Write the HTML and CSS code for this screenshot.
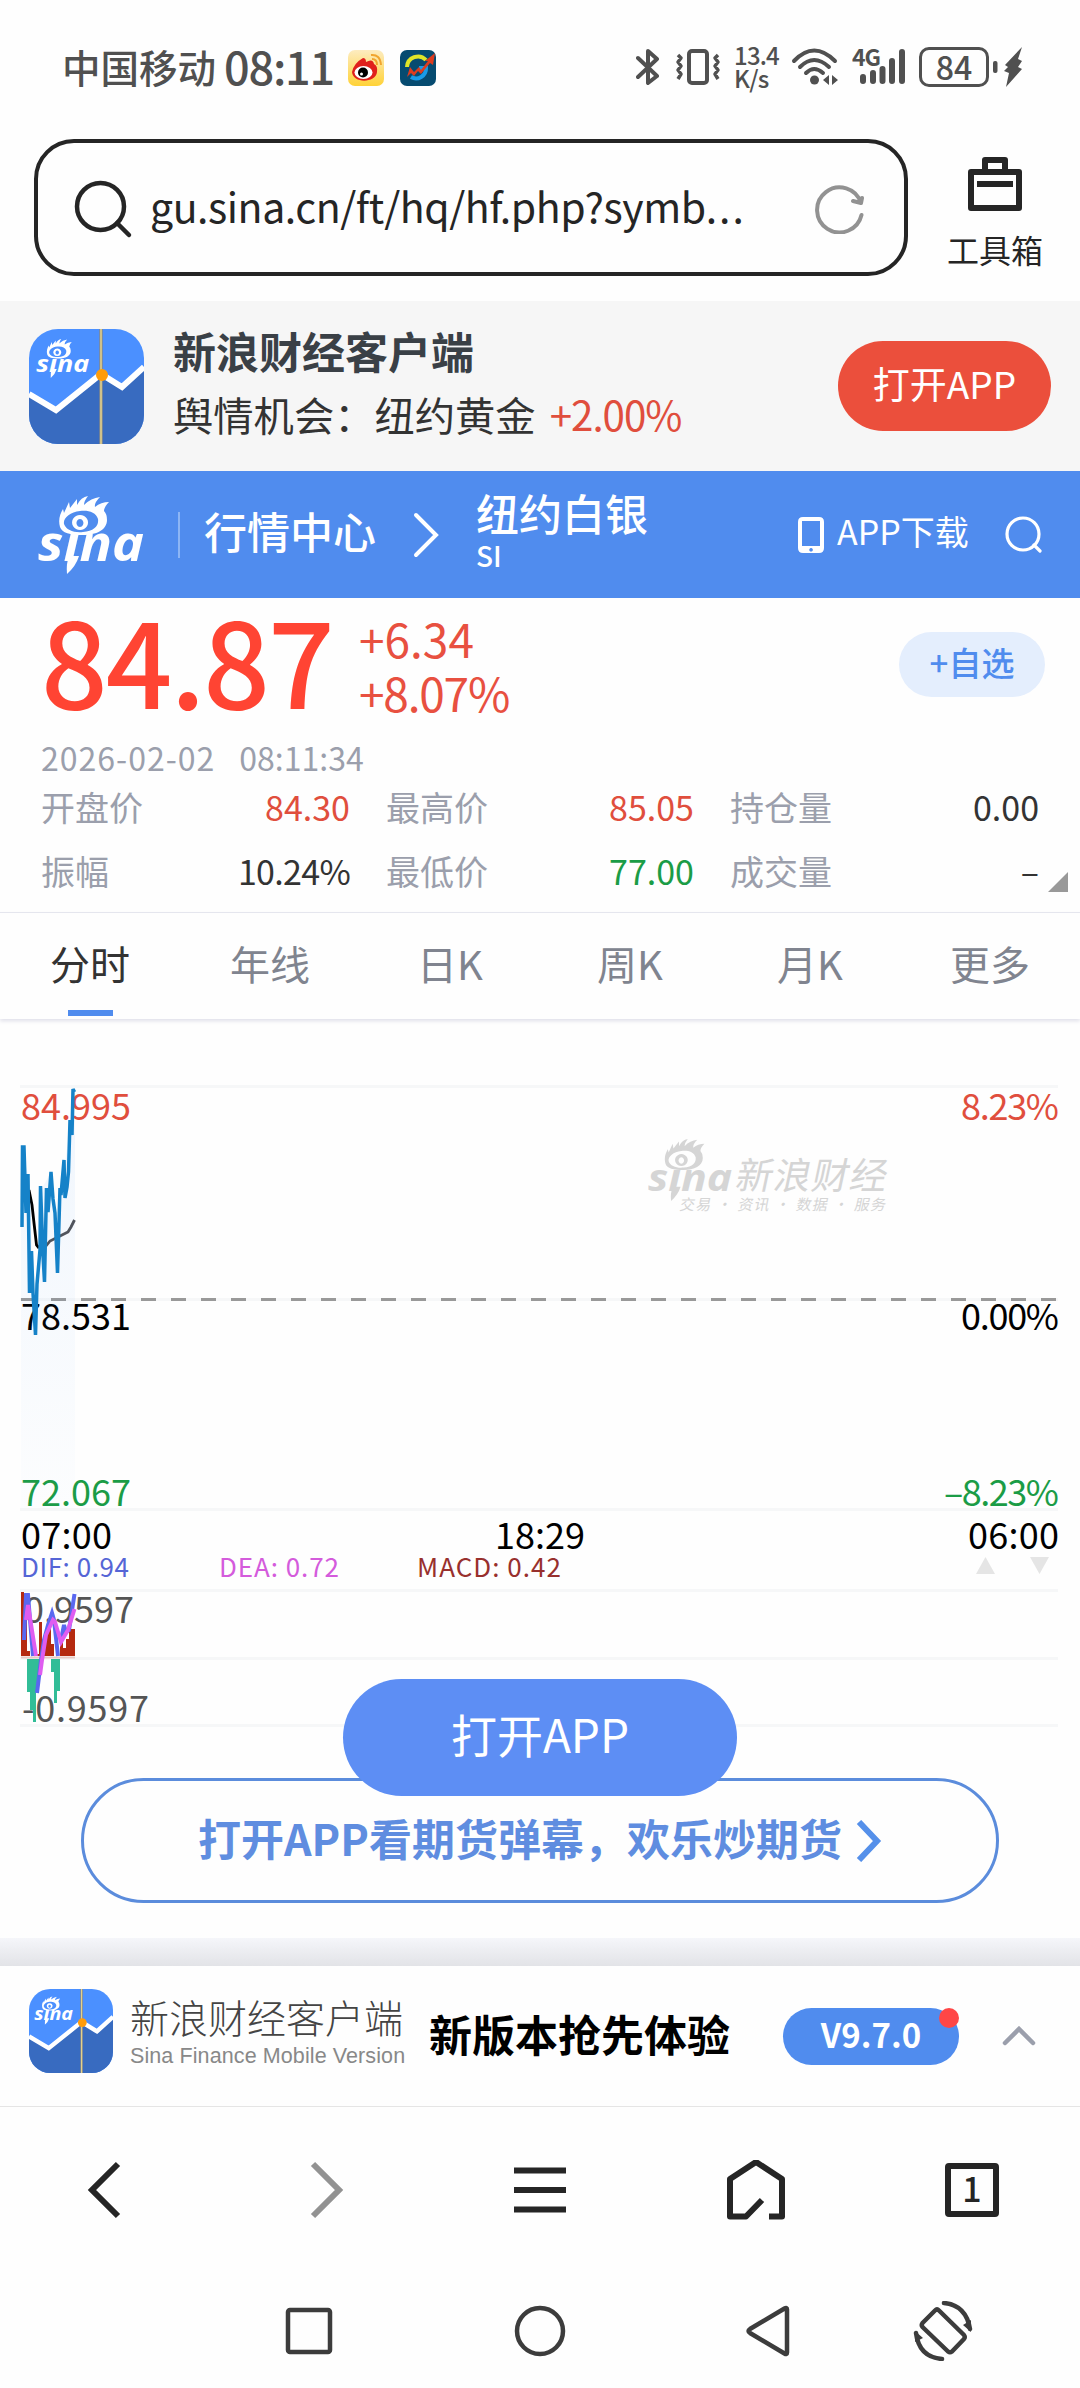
FILE: index.html
```html
<!DOCTYPE html>
<html lang="zh-CN">
<head>
    <meta charset="utf-8">
    <title>纽约白银</title>
    <link rel="stylesheet" href="styles.css">
</head>
<body>
    <svg class="defs" width="0" height="0">
        <symbol id="sina" viewBox="0 0 107 78">
            <path fill="currentColor" fill-rule="evenodd" d="M22 31C20 24 22 18 25 13L26 17L31 6L32 12L39 3L39 9Q43 1 50 0Q46 5 46 9Q53 2 62 1Q56 7 57 11Q63 6 71 6Q66 11 66 15Q69 18 69 24C69 34 58 39 45 39C32 39 24 37 22 31ZM26 28C28 34 36 37 45 36C56 35 61 30 60 23C58 16 50 14 42 15C32 16 25 22 26 28Z"/>
            <path fill="currentColor" fill-rule="evenodd" d="M42 19a8 7.500 0 1 0 .1 0ZM42 23a3.500 4 0 1 1-.1 0Z"/>
            <text class="sina-word" x="0" y="65" textLength="106" lengthAdjust="spacingAndGlyphs">sına</text>
            <path fill="currentColor" d="M31 60L41 60Q38 70 29 78Q28 68 31 60Z"/>
        </symbol>
        <symbol id="app-icon" viewBox="0 0 115 115">
            <clipPath id="r"><rect width="115" height="115" rx="29"/></clipPath>
            <g clip-path="url(#r)">
                <rect width="115" height="115" fill="#4b90ff"/>
                <path d="M0 65L27 82L72 46L93 58L115 38V115H0Z" fill="#386bc0"/>
                <path d="M0 65L27 81L72 45L93 58L115 38" fill="none" stroke="#fff" stroke-width="6"/>
                <path d="M72 0V115" stroke="#85898b" stroke-width="3.500"/>
                <path d="M72 0V115" stroke="#e8d58a" stroke-width="1.500"/>
                <circle cx="73" cy="46" r="6" fill="#ff9c0a"/>
                <use href="#sina" x="7" y="10" width="54" height="39" color="#fff"/>
            </g>
        </symbol>
    </svg>

    <div class="status">
        <span class="carrier">中国移动</span>
        <span class="clock">08:11</span>
        <svg class="weibo" width="36" height="36" viewBox="0 0 36 36">
            <defs><linearGradient id="wb" x2="0" y2="1"><stop offset="0" stop-color="#fdecc0"/><stop offset="1" stop-color="#ffd237"/></linearGradient></defs>
            <rect width="36" height="36" rx="7" fill="url(#wb)"/>
            <path d="M4 22Q6 13 15 8Q18 8 18 12Q25 8 26 14Q30 16 29 22C28 33 5 34 4 22Z" fill="#e0201c"/>
            <ellipse cx="15.500" cy="22.500" rx="9" ry="6.500" fill="#fff"/>
            <circle cx="15" cy="22.500" r="5" fill="#000"/>
            <circle cx="13.500" cy="24" r="1.500" fill="#fff"/>
            <path d="M23 5Q32 4 33 15M24 9Q29 9 29 15" fill="none" stroke="#f1a52f" stroke-width="2"/>
        </svg>
        <svg class="stock" width="36" height="36" viewBox="0 0 36 36">
            <rect width="36" height="36" rx="7" fill="#064b70"/>
            <path d="M7 17A11 11 0 0 1 26 10" fill="none" stroke="#dfe529" stroke-width="4"/>
            <path d="M11 27A10 10 0 0 0 26 18H19" fill="none" stroke="#189be8" stroke-width="4"/>
            <path d="M7 27L10 17L14 22L19 17L21 20L28 11L25 11L35 3L33 15L30 13L21 24L18 21L14 26L11 23Z" fill="#dc3c1f"/>
        </svg>
        <svg class="bt" width="24" height="38" viewBox="0 0 24 38" fill="none" stroke="#505050" stroke-width="4" stroke-linejoin="round" stroke-linecap="round">
            <path d="M2 10L21 28L12 35V3L21 11L2 29"/>
        </svg>
        <svg class="vib" width="46" height="38" viewBox="0 0 46 38" fill="none" stroke="#505050" stroke-width="4" stroke-linejoin="round">
            <rect x="14" y="3" width="18" height="32" rx="3"/>
            <path d="M3 7L6 10L3 14L6 18L3 22L6 26L3 31M43 7L40 10L43 14L40 18L43 22L40 26L43 31" stroke-width="3.500"/>
        </svg>
        <div class="speed">13.4<br>K/s</div>
        <svg class="wifi" width="48" height="38" viewBox="0 0 48 38" fill="none" stroke="#505050" stroke-width="4" stroke-linecap="round">
            <path d="M3 13Q23-8 44 13M9 19Q23 5 38 19M15 25Q23 17 32 25"/>
            <circle cx="23.500" cy="32" r="4.500" fill="#505050" stroke="none"/>
            <path d="M32 32L38 27V37ZM47 32L41 27V37Z" fill="#505050" stroke="none"/>
        </svg>
        <svg class="signal" width="54" height="38" viewBox="0 0 54 38">
            <text class="net" x="0" y="18">4G</text>
            <path d="M11 29V33M21 25V33M30.500 21V33M40 13V33M50 4V33" fill="none" stroke="#505050" stroke-width="6" stroke-linecap="round"/>
        </svg>
        <div class="battery">84</div>
        <svg class="bolt" width="32" height="40" viewBox="0 0 32 40" fill="#505050">
            <rect x="3" y="14" width="4.500" height="12" rx="2"/>
            <path d="M32 0L15 18L18 20L14 24L19 26L16 40L32 22L28 20L32 14L28 12Z"/>
        </svg>
    </div>

    <div class="address">
        <div class="url-box">
            <svg width="60" height="60" viewBox="0 0 60 60" fill="none" stroke="#252525" stroke-width="4.500" stroke-linecap="round">
                <circle cx="27.500" cy="27.500" r="23.500"/><path d="M44 44L56 56"/>
            </svg>
            <span class="url">gu.sina.cn/ft/hq/hf.php?symb<span class="dots">...</span></span>
            <svg class="reload" width="50" height="50" viewBox="0 0 50 50" fill="none" stroke="#929292" stroke-width="4" stroke-linecap="round" stroke-linejoin="round">
                <path d="M46.500 31A22.500 22.500 0 1 1 46 19L38 17M46 19L47 14"/>
            </svg>
        </div>
        <div class="tools">
            <svg width="54" height="54" viewBox="0 0 54 54" fill="none" stroke="#252525" stroke-width="6" stroke-linejoin="round">
                <rect x="3" y="15" width="48" height="36"/><path d="M17 15V3H37V15M9 27H45"/>
            </svg>
            <span>工具箱</span>
        </div>
    </div>

    <div class="banner">
        <svg width="115" height="115"><use href="#app-icon"/></svg>
        <div class="banner-text">
            <h3>新浪财经客户端</h3>
            <p>舆情机会：纽约黄金<span>+2.00%</span></p>
        </div>
        <a class="open-red">打开APP</a>
    </div>

    <div class="nav">
        <svg class="nav-logo" width="107" height="78"><use href="#sina"/></svg>
        <span class="nav-center">行情中心</span>
        <svg class="nav-arrow" width="26" height="46" viewBox="0 0 26 46" fill="none" stroke="#fff" stroke-width="4" stroke-linecap="round"><path d="M3 3L23 23L3 43"/></svg>
        <div class="nav-name">
            <h1>纽约白银</h1>
            <span>SI</span>
        </div>
        <svg class="nav-phone" width="26" height="36" viewBox="0 0 26 36"><path fill="#fff" fill-rule="evenodd" d="M5 0H21Q26 0 26 5V31Q26 36 21 36H5Q0 36 0 31V5Q0 0 5 0ZM4 4V29H22V4ZM13 31a1.800 1.800 0 1 0 .1 0Z"/></svg>
        <span class="nav-app">APP下载</span>
        <svg class="nav-search" width="37" height="37" viewBox="0 0 37 37" fill="none" stroke="#fff" stroke-width="3.200" stroke-linecap="round"><circle cx="18" cy="18" r="16"/><path d="M29 29L35 35"/></svg>
    </div>

    <div class="quote">
        <div class="quote-top">
            <span class="price">84.87</span>
            <div class="change"><span>+6.34</span><br>+8.07%</div>
            <a class="fav">+自选</a>
        </div>
        <div class="time"><span class="date">2026-02-02</span><span>08:11:34</span></div>
        <div class="stats">
            <div><label>开盘价</label><b class="up">84.30</b></div>
            <div><label>最高价</label><b class="up">85.05</b></div>
            <div><label>持仓量</label><b>0.00</b></div>
            <div><label>振幅</label><b class="pct">10.24%</b></div>
            <div><label>最低价</label><b class="down">77.00</b></div>
            <div><label>成交量</label><b>–</b></div>
        </div>
        <i class="corner"></i>
    </div>

    <div class="tabs">
        <a class="active">分时</a><a>年线</a><a>日K</a><a>周K</a><a>月K</a><a>更多</a>
    </div>

    <svg class="chart" width="1080" height="728" viewBox="0 1024 1080 728">
        <defs>
            <linearGradient id="area" x2="0" y2="1"><stop offset="0" stop-color="#3c8cf0" stop-opacity=".07"/><stop offset="1" stop-color="#3c8cf0" stop-opacity=".01"/></linearGradient>
        </defs>
        <!-- 网格线 -->
        <path class="grid" d="M20 1086.500H1058M20 1299.500H1058M20 1509.500H1058M20 1590.500H1058M20 1658.500H1058M20 1725.500H1058"/>
        <path class="dash" d="M21 1299.500H1058"/>
        <!-- 水印 -->
        <g class="mark">
            <use href="#sina" x="648" y="1139" width="85" height="62"/>
            <text class="mark-name" transform="translate(734 1189) skewX(-12)" textLength="151">新浪财经</text>
            <text class="mark-sub" transform="translate(679 1210) skewX(-12)" textLength="206">交易 · 资讯 · 数据 · 服务</text>
        </g>
        <g class="axis">
            <text class="up" x="21" y="1119.500">84.995</text>
            <text x="21" y="1329.500">78.531</text>
            <text class="down" x="21" y="1506">72.067</text>
            <text class="up end" x="1059" y="1119.500" textLength="98">8.23%</text>
            <text class="end" x="1059" y="1329.500" textLength="98">0.00%</text>
            <text class="down end" x="1059" y="1506" textLength="115">–8.23%</text>
            <text x="21" y="1549" textLength="91">07:00</text>
            <text class="mid" x="540" y="1549" textLength="90">18:29</text>
            <text class="end" x="1059" y="1549" textLength="91">06:00</text>
            <text class="gray" x="24" y="1623">0.9597</text>
            <text class="gray" x="22" y="1722" textLength="127">-0.9597</text>
        </g>
        <g class="macd">
            <text x="21" y="1577" fill="#5565d6" textLength="108">DIF: 0.94</text>
            <text x="219" y="1577" fill="#d45bdc" textLength="120">DEA: 0.72</text>
            <text x="417" y="1577" fill="#98302d" textLength="144">MACD: 0.42</text>
        </g>
        <path d="M976 1574L985.500 1557L995 1574ZM1030 1557H1049L1039.500 1574Z" fill="#e5e5e5"/>
        <!-- 分时 -->
        <path fill="url(#area)" d="M21 1147L28 1174L36 1310L41 1190L51 1172L57 1260L64 1170L75 1090V1508H21Z"/>
        <path class="avg" stroke="#000" d="M29 1190L32 1205L34 1223L36.500 1245L39 1248"/>
        <path class="avg" stroke="#50545c" d="M46 1246L50 1241L60 1236L68 1232L71 1227L74.500 1220"/>
        <path class="line" d="M22 1227L22.500 1147H24L26 1213L28 1174L29.500 1293L31.500 1251L33 1293L35.500 1335L37 1284L40 1250L40.500 1186L43 1255L44.500 1282L46.500 1188L48 1212L51 1172L53 1199L55 1213L57.500 1273L60 1188L61 1195L64 1160L65 1198L67 1187L68.500 1172L70 1120L72 1135L73 1089L74.500 1092"/>
        <!-- MACD -->
        <path fill="#b52a10" d="M21 1656V1592H24V1620H27V1651H30V1656ZM36 1656V1654H39V1622H42V1648H45V1629H48V1625H51V1644H54V1656ZM60 1656V1640H63V1648H66V1639H69V1629H75V1656Z"/>
        <path d="M21 1657.500H75" stroke="#e7c9c5" stroke-width="2"/>
        <path fill="#31bd97" d="M27 1659H39V1688H36V1722H33V1710H30V1692H27ZM51 1659H60V1691H57V1703H54V1672H51Z"/>
        <path class="dif" d="M24 1640L26 1595L28 1595L33 1656M37 1693L41 1660L44 1640L48 1625L52 1613L54 1620L58 1656M61 1640L64 1625L66 1632L69 1630L74.500 1594"/>
        <path class="dea" d="M26 1620L28 1605L36 1656M40 1675L42 1660L46 1635L53 1620L55 1622L61 1642L68 1630L74.500 1609"/>
    </svg>

    <div class="promo">
        <a class="open-line"><span>打开APP看期货弹幕，欢乐炒期货</span>
            <svg width="26" height="42" viewBox="0 0 26 42" fill="none" stroke="#5590ea" stroke-width="6"><path d="M3 2L21 21L3 40"/></svg>
        </a>
        <a class="open-blue">打开APP</a>
    </div>

    <div class="gap"></div>
    <div class="footer">
        <svg class="footer-icon" width="84" height="84"><use href="#app-icon"/></svg>
        <div class="footer-name">
            <span class="cn">新浪财经客户端</span>
            <span class="en">Sina Finance Mobile Version</span>
        </div>
        <strong>新版本抢先体验</strong>
        <a class="version">V9.7.0<i></i></a>
        <svg class="footer-up" width="34" height="20" viewBox="0 0 34 20" fill="none" stroke="#9b9fac" stroke-width="4.500" stroke-linecap="round"><path d="M3 17L17 3L31 17"/></svg>
    </div>

    <div class="browser-bar">
        <svg viewBox="0 0 60 60" fill="none" stroke="#252525" stroke-width="6"><path d="M40 4L14 30L40 56"/></svg>
        <svg viewBox="0 0 60 60" fill="none" stroke="#929292" stroke-width="6"><path d="M19 4L45 30L19 56"/></svg>
        <svg viewBox="0 0 60 60" fill="none" stroke="#252525" stroke-width="6"><path d="M4 10.500H56M4 30H56M4 49.500H56"/></svg>
        <svg viewBox="0 0 60 60" fill="none" stroke="#252525" stroke-width="6" stroke-linejoin="round"><path d="M36 40L20 56.500H4V19L30 2L56 19V56.500H43"/></svg>
        <div class="pages"><span>1</span></div>
    </div>

    <div class="system-bar">
        <svg width="60" height="60" viewBox="0 0 60 60"><rect x="9" y="9" width="42" height="42" rx="2"/></svg>
        <svg width="60" height="60" viewBox="0 0 60 60"><circle cx="30" cy="30" r="23"/></svg>
        <svg width="60" height="60" viewBox="0 0 60 60"><path d="M46 8.500V51.500Q46 54 43.500 52.500L9 32Q6 30 9 28L43.500 7.500Q46 6 46 8.500Z"/></svg>
        <svg width="60" height="60" viewBox="0 0 60 60">
            <path d="M22 9.500Q24 7.500 26 9.500L51 34Q52.500 36 51 38L39 50.500Q37 52 35 50.500L9.500 26Q8 24 9.500 22Z" stroke-linejoin="round"/>
            <path d="M31 2Q53 4 57 28M29 58Q6 56 3 32"/>
            <path d="M50 24L58 19V31ZM10 37L2 30V41Z" fill="#3c3c3c" stroke="none"/>
        </svg>
    </div>
</body>
</html>
```

FILE: styles.css
```css
body {
    margin: 0;
    width: 1080px;
    height: 2388px;
    overflow: hidden;
    background: #fefefe;
    color: #333;
    font-family: "Noto Sans CJK SC", sans-serif;
}

h1, h3, p {
    margin: 0;
    font-weight: 400;
}

svg {
    flex: none;
    display: block;
}

.defs {
    position: absolute;
}

.sina-word {
    font-family: "Open Sans", sans-serif;
    font-size: 48px;
    font-weight: 700;
    font-style: italic;
    fill: currentColor;
}

/* 状态栏 */
.status {
    display: flex;
    align-items: center;
    box-sizing: border-box;
    height: 134px;
    padding-left: 62px;
    color: #505050;
    white-space: nowrap;
}

.carrier {
    width: 162px;
    margin-top: -3px;
    font-size: 38.500px;
    font-weight: 500;
    line-height: 50px;
}

.clock {
    width: 124px;
    margin-top: -3px;
    font-size: 45px;
    font-weight: 500;
    line-height: 50px;
    letter-spacing: -1.200px;
}

.weibo { margin-top: 2px; }
.stock { margin: 2px 0 0 16px; }
.bt { margin-left: 200px; }
.vib { margin-left: 15px; }

.speed {
    width: 57px;
    margin: -2px 0 0 13px;
    font-size: 24px;
    font-weight: 500;
    line-height: 23px;
    letter-spacing: -0.800px;
}

.signal { margin-left: 13px; }

.net {
    font-size: 23px;
    font-weight: 700;
    fill: #505050;
    letter-spacing: -1px;
}

.battery {
    box-sizing: border-box;
    width: 70px;
    height: 40px;
    margin-left: 13px;
    border: 3px solid #505050;
    border-radius: 10px;
    font-size: 32px;
    font-weight: 500;
    line-height: 32px;
    text-align: center;
}

.bolt { margin-left: 1px; }

/* 地址栏 */
.address {
    display: flex;
    box-sizing: border-box;
    height: 167px;
    padding: 5px 0 0 34px;
    color: #252525;
}

.url-box {
    display: flex;
    align-items: center;
    box-sizing: border-box;
    width: 874px;
    height: 137px;
    padding: 2px 39px 0 35px;
    border: 4.500px solid #252525;
    border-radius: 40px;
}

.url {
    flex: 1;
    margin: -8px 0 0 17px;
    font-size: 41px;
    letter-spacing: -0.450px;
    white-space: nowrap;
}

.dots { letter-spacing: 2px; }

.tools {
    display: flex;
    flex-direction: column;
    align-items: center;
    width: 172px;
    padding: 18px 0 0 2px;
    box-sizing: border-box;
    font-size: 32px;
    line-height: 40px;
}

.tools span { margin-top: 18px; }

/* 下载横幅 */
.banner {
    display: flex;
    align-items: center;
    box-sizing: border-box;
    height: 170px;
    padding: 0 29px;
    background: #f6f6f6;
}

.banner-text {
    flex: 1;
    margin: -9px 0 0 29px;
}

.banner h3 {
    color: #3a4046;
    font-size: 43px;
    font-weight: 700;
    line-height: 60px;
}

.banner p {
    margin-top: 4px;
    font-size: 40.300px;
    line-height: 60px;
}

.banner p span {
    margin-left: 14px;
    color: #e04e3d;
    letter-spacing: -1px;
}

.open-red {
    width: 213px;
    height: 90px;
    border-radius: 45px;
    background: #eb4f3c;
    color: #fff;
    font-size: 37px;
    line-height: 84px;
    text-align: center;
}

/* 导航 */
.nav {
    display: flex;
    align-items: center;
    box-sizing: border-box;
    height: 127px;
    padding-left: 38px;
    background: #508cee;
    color: #fff;
}

.nav-center {
    margin-left: 33px;
    padding-left: 24px;
    border-left: 2px solid #8cb5f5;
    font-size: 43px;
    font-weight: 500;
    line-height: 36px;
    padding-bottom: 10px;
}

.nav-arrow { margin-left: 37px; }

.nav-name {
    width: 322px;
    margin: -11px 0 0 37px;
}

.nav-name h1 {
    font-size: 43px;
    font-weight: 500;
    line-height: 52px;
}

.nav-name span {
    display: block;
    font-size: 28px;
    font-weight: 500;
    line-height: 34px;
}

.nav-app {
    width: 157px;
    margin: -8px 0 0 13px;
    font-size: 34px;
    line-height: 40px;
}

.nav-search { margin-left: 11px; }

/* 行情 */
.quote {
    position: relative;
    box-sizing: border-box;
    height: 315px;
    padding: 9px 41px 0;
    border-bottom: 1px solid #e5e6ee;
}

.quote-top {
    display: flex;
    height: 129px;
}

.price {
    width: 318px;
    color: #ff4433;
    font-size: 117px;
    font-weight: 500;
    line-height: 102px;
    letter-spacing: -2px;
}

.change {
    flex: 1;
    padding-top: 4px;
    color: #e85040;
    font-size: 46px;
    line-height: 54px;
    letter-spacing: -1.200px;
}

.change span { letter-spacing: 0; }

.fav {
    width: 146px;
    height: 65px;
    margin: 25px -6px 0 0;
    border-radius: 33px;
    background: #e4eefd;
    color: #508cee;
    font-size: 33px;
    font-weight: 500;
    line-height: 60px;
    text-align: center;
}

.time {
    display: flex;
    gap: 24px;
    height: 46px;
    color: #9b9fac;
    font-size: 32px;
    line-height: 43px;
}

.date { letter-spacing: 1px; }

.stats {
    display: grid;
    grid-template-columns: 309px 308px 309px;
    column-gap: 36px;
    row-gap: 14px;
}

.stats div {
    display: flex;
    justify-content: space-between;
    font-size: 34px;
    line-height: 50px;
}

.stats label { color: #9b9fac; }
.stats b { font-weight: 400; }
.stats .up { color: #e04e3d; }
.stats .down { color: #1b9c46; }
.stats .pct { letter-spacing: -0.700px; }

.corner {
    position: absolute;
    right: 12px;
    bottom: 20px;
    border-left: 20px solid transparent;
    border-bottom: 20px solid #999;
}

/* 标签 */
.tabs {
    display: grid;
    grid-template-columns: repeat(6, 1fr);
    height: 106px;
    box-shadow: 0 2px 4px #dfdfe9;
    color: #80848f;
    font-size: 40px;
    line-height: 101px;
    text-align: center;
}

.tabs .active {
    position: relative;
    color: #333;
}

.tabs .active::after {
    content: "";
    position: absolute;
    left: 68px;
    top: 97px;
    width: 45px;
    height: 6px;
    background: #508cee;
}

/* 图表 */
.chart { margin-top: 5px; }

.grid {
    stroke: #f6f7f8;
    stroke-width: 3;
}

.dash {
    stroke: #999;
    stroke-width: 3;
    stroke-dasharray: 15 15;
}

.mark {
    color: #d5d5d5;
    fill: #d5d5d5;
}

.mark-name { font-size: 37px; }
.mark-sub { font-size: 15px; }

.axis { font-size: 36px; fill: #000; }
.axis .up { fill: #e04e3d; }
.axis .down { fill: #1b9c46; }
.axis .gray { fill: #555; }
.axis .end { text-anchor: end; }
.axis .mid { text-anchor: middle; }

.macd { font-size: 26px; }

.avg, .line, .dif, .dea {
    fill: none;
    stroke-width: 2.800;
}

.line { stroke: #1582c8; stroke-width: 3.500; }
.dif { stroke: #5a68f0; stroke-width: 4; }
.dea { stroke: #df5cf0; stroke-width: 4; }

.promo {
    position: relative;
    box-sizing: border-box;
    height: 186px;
    padding-top: 26px;
}

.open-blue {
    position: absolute;
    left: 343px;
    top: -73px;
    width: 394px;
    height: 117px;
    border-radius: 59px;
    background: #5d8ef4;
    color: #fff;
    font-size: 46px;
    line-height: 108px;
    text-align: center;
}

.open-line {
    display: flex;
    align-items: center;
    justify-content: center;
    gap: 14px;
    box-sizing: border-box;
    width: 918px;
    height: 125px;
    margin: 0 81px;
    border: 3px solid #5b8cdc;
    border-radius: 63px;
    color: #5f8de0;
    font-size: 43px;
    font-weight: 700;
}

.open-line span { margin-top: -8px; }

.gap {
    height: 28px;
    background: linear-gradient(#f5f6fa, #e2e3e7);
}

/* 底部 */
.footer {
    display: flex;
    align-items: center;
    box-sizing: border-box;
    height: 141px;
    padding-left: 29px;
    border-bottom: 1px solid #e5e5e5;
    white-space: nowrap;
}

.footer-icon { margin-top: -10px; }

.footer-name {
    width: 276px;
    margin: -10px 23px 0 17px;
}

.footer-name span { display: block; }

.footer-name .cn {
    color: #444;
    font-size: 39px;
    font-weight: 300;
    line-height: 44px;
}

.footer-name .en {
    margin-top: 5px;
    color: #888;
    font-family: "Liberation Sans", sans-serif;
    font-size: 21.500px;
    line-height: 26px;
    letter-spacing: 0.100px;
}

.footer strong {
    width: 354px;
    margin-top: -7px;
    color: #000;
    font-size: 43px;
    line-height: 60px;
}

.version {
    position: relative;
    width: 176px;
    height: 57px;
    border-radius: 29px;
    background: #508cee;
    color: #fff;
    font-size: 33px;
    font-weight: 700;
    line-height: 52px;
    text-align: center;
}

.version i {
    position: absolute;
    right: 0;
    top: 0;
    width: 20px;
    height: 20px;
    border-radius: 50%;
    background: #ff4646;
}

.footer-up { margin-left: 43px; }

.browser-bar {
    display: grid;
    grid-template-columns: repeat(5, 216px);
    align-items: center;
    justify-items: center;
    height: 166px;
}

.browser-bar svg {
    width: 60px;
    height: 60px;
}

.pages {
    box-sizing: border-box;
    width: 54px;
    height: 54px;
    border: 6px solid #252525;
    border-radius: 4px;
    color: #252525;
    font-size: 34px;
    font-weight: 500;
    line-height: 38px;
    text-align: center;
}

.system-bar {
    display: flex;
    gap: 171px;
    padding: 28px 0 0 279px;
    fill: none;
    stroke: #3c3c3c;
    stroke-width: 4.500;
    stroke-linecap: round;
}

.system-bar svg:last-child { margin-left: -59px; }
```
